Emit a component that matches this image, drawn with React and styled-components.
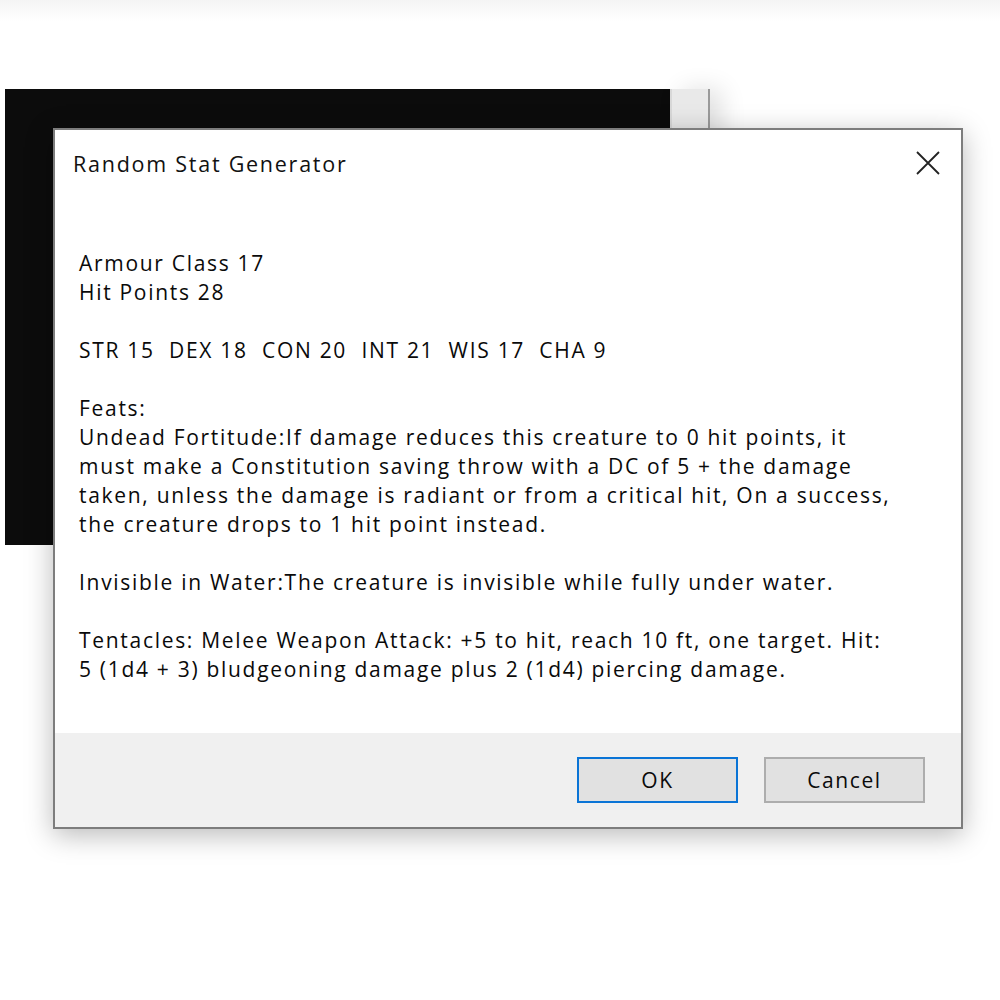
import styled, { createGlobalStyle } from "styled-components"

const GlobalStyle = createGlobalStyle`
  * { box-sizing: border-box; }
  html, body { margin: 0; padding: 0; background: #ffffff; }
  body { font-family: "Open Sans", "Noto Sans", "Liberation Sans", sans-serif; }
`

const Desktop = styled.div`
  position: relative;
  width: 1000px;
  height: 1000px;
  overflow: hidden;
  background: linear-gradient(to bottom, #f4f4f4 0px, #ffffff 22px);
`

const BackWindow = styled.div`
  position: absolute;
  left: 5px;
  top: 89px;
  width: 665px;
  height: 456px;
  background: #0c0c0c;
`

const SideWindow = styled.div`
  position: absolute;
  left: 670px;
  top: 89px;
  width: 40px;
  height: 460px;
  background: #e9e9e9;
  border-left: 2px solid #d8d8d8;
  border-right: 2px solid #9a9a9a;
  box-shadow: 12px 0 24px rgba(0, 0, 0, 0.12);
`

const Dialog = styled.div`
  position: absolute;
  left: 53px;
  top: 128px;
  width: 910px;
  height: 701px;
  display: flex;
  flex-direction: column;
  background: #ffffff;
  border: 2px solid #7d7d7d;
  box-shadow: 0 6px 26px rgba(0, 0, 0, 0.28);
`

const TitleBar = styled.div`
  height: 66px;
  display: flex;
  align-items: center;
  justify-content: space-between;
  padding: 0 18px 0 18px;
`

const Title = styled.div`
  font-size: 21.5px;
  letter-spacing: 1.75px;
  color: #111;
`

const CloseButton = styled.div`
  width: 30px;
  height: 30px;
  display: flex;
  align-items: center;
  justify-content: center;
  color: #222;
`

const Content = styled.div`
  flex: 1;
  padding: 53px 24px 0 24px;
  font-size: 21px;
  letter-spacing: 1.7px;
  line-height: 29px;
  color: #0a0a0a;
`

const Line = styled.div`
  white-space: pre;
  height: 29px;
`

const Footer = styled.div`
  height: 94px;
  background: #f0f0f0;
  display: flex;
  align-items: center;
  justify-content: flex-end;
  gap: 26px;
  padding-right: 36px;
`

const Button = styled.div`
  width: 161px;
  height: 46px;
  display: flex;
  align-items: center;
  justify-content: center;
  background: #e1e1e1;
  border: 2px solid ${props => (props.primary ? "#0a74d6" : "#adadad")};
  font-size: 21px;
  letter-spacing: 1.6px;
  color: #0a0a0a;
`

const lines = [
  "Armour Class 17",
  "Hit Points 28",
  "",
  "STR 15  DEX 18  CON 20  INT 21  WIS 17  CHA 9",
  "",
  "Feats:",
  "Undead Fortitude:If damage reduces this creature to 0 hit points, it",
  "must make a Constitution saving throw with a DC of 5 + the damage",
  "taken, unless the damage is radiant or from a critical hit, On a success,",
  "the creature drops to 1 hit point instead.",
  "",
  "Invisible in Water:The creature is invisible while fully under water.",
  "",
  "Tentacles: Melee Weapon Attack: +5 to hit, reach 10 ft, one target. Hit:",
  "5 (1d4 + 3) bludgeoning damage plus 2 (1d4) piercing damage.",
]

const App = () => {
  return (
    <Desktop>
      <GlobalStyle />
      <BackWindow />
      <SideWindow />
      <Dialog>
        <TitleBar>
          <Title>Random Stat Generator</Title>
          <CloseButton>
            <svg width="24" height="24" viewBox="0 0 24 24">
              <path d="M1 1 L23 23 M23 1 L1 23" stroke="#222" strokeWidth="1.8" fill="none" />
            </svg>
          </CloseButton>
        </TitleBar>
        <Content>
          {lines.map((l, i) => (
            <Line key={i}>{l}</Line>
          ))}
        </Content>
        <Footer>
          <Button primary>OK</Button>
          <Button>Cancel</Button>
        </Footer>
      </Dialog>
    </Desktop>
  )
}

export default App
